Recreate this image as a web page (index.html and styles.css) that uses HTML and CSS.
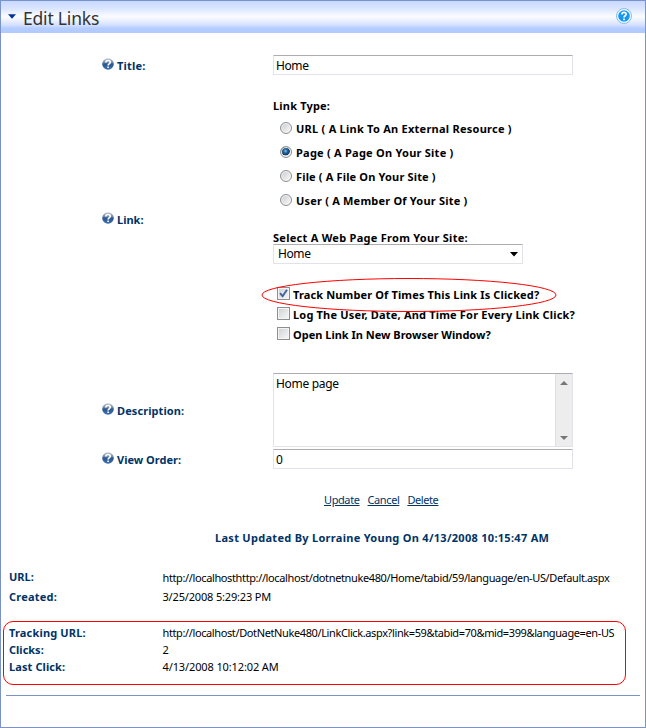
FILE: index.html
```html
<!DOCTYPE html>
<html lang="en">
<head>
<meta charset="utf-8">
<title>Edit Links</title>
<link rel="stylesheet" href="styles.css">
</head>
<body>
<svg class="defs" width="0" height="0">
  <defs>
    <linearGradient id="helpFill" x1="0" y1="0" x2="0" y2="1"><stop offset="0" stop-color="#c3ccd6"/><stop offset=".38" stop-color="#7088a5"/><stop offset=".5" stop-color="#2b568e"/><stop offset="1" stop-color="#3e72b5"/></linearGradient>
    <symbol id="help" viewBox="0 0 12 12">
      <circle cx="6" cy="6" r="5.8" fill="url(#helpFill)"/>
      <path d="M3.9 4.5C3.9 1.9 8.3 1.9 8.3 4.3 8.3 5.8 6.1 5.8 6.1 7.4M6.1 8.5v1.5" fill="none" stroke="#fff" stroke-width="1.6"/>
    </symbol>
  </defs>
</svg>
<main class="panel">
  <header class="head">
    <svg class="caret" width="8" height="5" viewBox="0 0 8 5"><path d="M0 .3h8L4 4.8z" fill="#003399"/></svg>
    <h1>Edit Links</h1>
    <svg class="head-help" width="16" height="16" viewBox="0 0 16 16">
      <circle cx="8" cy="8" r="7.5" fill="#f4faff" stroke="#85bdf0"/>
      <circle cx="8" cy="8" r="5.8" fill="#1697f2"/>
      <path d="M5.8 6.5C5.8 3.5 10.4 3.7 10.2 6.3 10.1 7.8 8 7.7 8 9.5M8 10.6v1.7" fill="none" stroke="#fff" stroke-width="1.7"/>
    </svg>
  </header>
  <form class="form">
    <div class="row row-title">
      <div class="label"><svg class="help"><use href="#help"/></svg><span class="t-title">Title:</span></div>
      <div class="box">Home</div>
    </div>
    <div class="row row-link">
      <div class="label"><svg class="help"><use href="#help"/></svg><span>Link:</span></div>
      <div class="fields">
        <div class="caption"><span class="t-type">Link Type:</span></div>
        <div class="option"><i class="radio"></i><span class="t-url">URL ( A Link To An External Resource )</span></div>
        <div class="option"><i class="radio on"></i><span class="t-page">Page ( A Page On Your Site )</span></div>
        <div class="option"><i class="radio"></i><span class="t-file">File ( A File On Your Site )</span></div>
        <div class="option"><i class="radio"></i><span class="t-user">User ( A Member Of Your Site )</span></div>
        <div class="caption caption-page"><span class="t-select">Select A Web Page From Your Site:</span></div>
        <div class="box select"><span class="t-home">Home</span><svg width="8" height="5" viewBox="0 0 8 5"><path d="M0 0h8L4 4.6z"/></svg></div>
        <div class="checks">
          <div class="check"><i class="tick"><svg width="9" height="9" viewBox="0 0 9 9"><path d="M1 4.2L3.6 7.2 8 .8" fill="none" stroke="#41629e" stroke-width="1.9"/></svg></i><span class="t-track">Track Number Of Times This Link Is Clicked?</span></div>
          <div class="check"><i class="tick"></i><span class="t-log">Log The User, Date, And Time For Every Link Click?</span></div>
          <div class="check"><i class="tick"></i><span>Open Link In New Browser Window?</span></div>
          <svg class="ellipse" width="296" height="36" viewBox="0 0 296 36"><ellipse cx="148" cy="18" rx="147" ry="16.5" fill="none" stroke="#f00"/></svg>
        </div>
      </div>
    </div>
    <div class="row row-desc">
      <div class="label"><svg class="help"><use href="#help"/></svg><span class="t-desc">Description:</span></div>
      <div class="box area"><span class="t-homepage">Home page</span>
        <div class="scroll"><svg width="8" height="4" viewBox="0 0 8 4"><path d="M0 4h8L4 0z" fill="#777"/></svg><svg width="8" height="4" viewBox="0 0 8 4"><path d="M0 0h8L4 4z" fill="#777"/></svg></div>
      </div>
    </div>
    <div class="row row-order">
      <div class="label"><svg class="help"><use href="#help"/></svg><span>View Order:</span></div>
      <div class="box">0</div>
    </div>
  </form>
  <nav class="actions"><a>Update</a><a>Cancel</a><a>Delete</a></nav>
  <p class="updated"><span>Last Updated By Lorraine Young On 4/13/2008 10:15:47 AM</span></p>
  <dl class="info">
    <dt><span>URL:</span></dt><dd class="value-url"><span class="t-vurl">http://localhosthttp://localhost/dotnetnuke480/Home/tabid/59/language/en-US/Default.aspx</span></dd>
    <dt><span class="t-created">Created:</span></dt><dd><span class="t-vcreated">3/25/2008 5:29:23 PM</span></dd>
  </dl>
  <dl class="info tracking">
    <dt><span class="t-turl">Tracking URL:</span></dt><dd><span class="t-vturl">http://localhost/DotNetNuke480/LinkClick.aspx?link=59&amp;tabid=70&amp;mid=399&amp;language=en-US</span></dd>
    <dt><span>Clicks:</span></dt><dd>2</dd>
    <dt><span class="t-last">Last Click:</span></dt><dd><span class="t-vlast">4/13/2008 10:12:02 AM</span></dd>
  </dl>
  <hr>
</main>
</body>
</html>
```
FILE: styles.css
```css
* { box-sizing: border-box; }
body { margin: 0; background: #fff; font: 11px/16px "Noto Sans", sans-serif; color: #000; }
.defs { position: absolute; }
.panel { width: 646px; height: 728px; border: 1px solid #7a94cb; overflow: hidden; }
.panel span, .panel a, h1 { white-space: nowrap; }
.head { height: 32px; display: flex; align-items: center; padding: 0 13px 0 7px; background: linear-gradient(#c8d8ff 0, #dce6ff 25%, #fafcff 48%, #f0f4ff 58%, #d4e0ff 75%, #b4ccff 86%, #b1caff 100%); }
.caret { margin-bottom: 2px; }
h1 { margin: 0 auto 0 7px; font-size: 17.5px; line-height: 24px; letter-spacing: -.2px; padding-top: 1px; font-weight: 400; color: #333; }
.head-help { margin-bottom: 2px; }
.form { padding-left: 101px; }
.row { display: grid; grid-template-columns: 171px 300px; align-items: center; }
.row-title { margin-top: 22px; height: 20px; }
.row-link { margin-top: 23px; height: 246px; }
.row-desc { margin-top: 29px; height: 74px; }
.row-order { margin-top: 2px; height: 20px; }
.label { display: flex; align-items: center; gap: 3px; font-weight: 700; color: #003366; padding-top: 1px; }
.row-link .label { padding-bottom: 5px; }
.help { width: 12px; height: 12px; margin-bottom: 3px; flex: none; }
.box { height: 20px; border: 1px solid #e2e3ea; border-top-color: #abadb3; border-radius: 1px; padding: 2px 2px; font-size: 12px; line-height: 16px; letter-spacing: -.4px; background: #fff; }
.fields { align-self: start; font-weight: 700; }
.caption { height: 18px; }
.option { height: 24px; display: flex; align-items: center; gap: 4px; padding: 0 0 0 7px; }
.option span { padding-top: 2px; }
.radio { flex: none; width: 12px; height: 12px; border: 1px solid #8e8f8f; border-radius: 50%; background: linear-gradient(135deg, #c8ccd0, #fafafa); box-shadow: inset 0 0 0 1px #f4f4f4; margin-bottom: 1px; }
.radio.on { background: radial-gradient(circle at 45% 40%, #7cc8ee 0, #21639b 25%, #123c66 50%, #e4e8ec 58%); }
.caption-page { height: 16px; margin-top: 18px; }
.select { width: 250px; display: flex; align-items: center; justify-content: space-between; padding: 0 4px; margin-top: -2px; font-weight: 400; }
.checks { position: relative; margin-top: 21px; }
.check { height: 20px; display: flex; align-items: center; gap: 3px; padding-left: 4px; }
.tick { flex: none; width: 13px; height: 13px; border: 1px solid #8e8f8f; background: linear-gradient(135deg, #cdd1d5, #f8f8f8); box-shadow: inset 0 0 0 1px #f4f4f4; margin-bottom: 3px; display: flex; align-items: center; justify-content: center; }
.ellipse { position: absolute; left: -12px; top: -8px; }
.area { height: 74px; display: flex; justify-content: space-between; padding: 0; padding-left: 2px; line-height: 20px; }
.scroll { width: 17px; border-left: 1px solid #dde0e5; background: #ededed; display: flex; flex-direction: column; align-items: center; justify-content: space-between; padding: 7px 0 6px; }
.actions { display: flex; gap: 8px; margin: 23px 0 0 323px; color: #003366; letter-spacing: -.4px; height: 16px; }
.actions a { text-decoration: underline; }
.updated { margin: 22px 0 0 214px; font-weight: 700; color: #003366; letter-spacing: .29px; }
.info { margin: 21px 0 0 2px; padding-left: 6px; display: grid; grid-template-columns: 153px 1fr; grid-auto-rows: 20px; line-height: 20px; }
.info dt { font-weight: 700; color: #003366; }
.info dd { margin: 0; padding-left: .5px; }
.info .value-url { padding-top: 1px; }
.tracking { width: 623px; height: 64px; margin-top: 14px; padding: 1px 0 0 5px; border: 1px solid #f00; border-radius: 10px; grid-auto-rows: 17px; }
hr { margin: 10px 5px 0; border: 0; height: 1px; background: #7a94cb; }

/* Per-string tracking */
.t-type, .t-title { letter-spacing: .18px; }
.t-url { letter-spacing: .25px; }
.t-page { letter-spacing: .24px; }
.t-file { letter-spacing: .16px; }
.t-user { letter-spacing: .2px; }
.t-select { letter-spacing: .27px; }
.t-track { letter-spacing: .13px; }
.t-log { letter-spacing: .18px; }
.t-desc { letter-spacing: .08px; }
.t-homepage { letter-spacing: -.3px; }
.t-created { letter-spacing: .22px; }
.t-turl { letter-spacing: .17px; }
.t-last { letter-spacing: .1px; }
.t-vurl { letter-spacing: -.375px; }
.t-vcreated { letter-spacing: -.17px; }
.t-vturl { letter-spacing: -.385px; }
.t-vlast { letter-spacing: -.12px; }
```
